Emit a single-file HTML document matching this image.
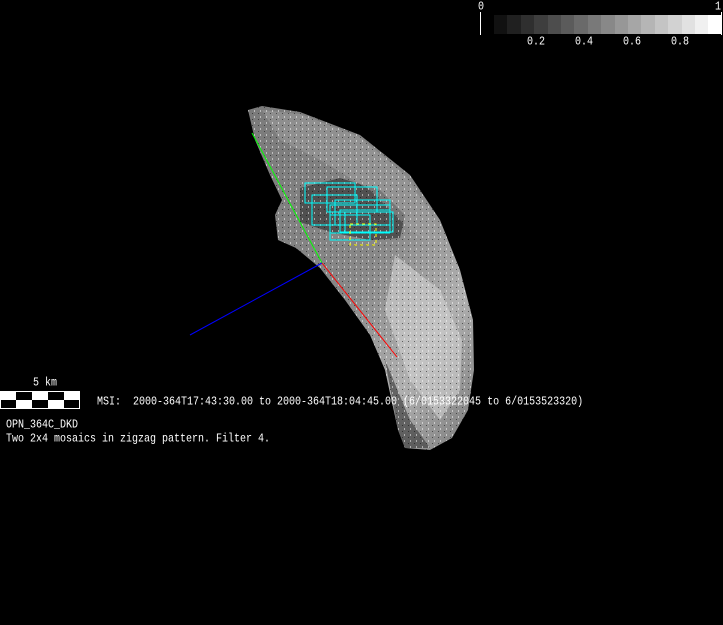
<!DOCTYPE html>
<html><head><meta charset="utf-8"><style>
html,body{margin:0;padding:0;background:#000;width:723px;height:625px;overflow:hidden;position:relative}
.t{position:absolute;color:#fff;font-family:"Liberation Mono",monospace;font-size:10px;white-space:pre;line-height:12px;transform:scaleY(1.2);transform-origin:0 0}
.cb{position:absolute;top:15px;height:19px;width:13.4px}
</style></head><body>
<div style="position:absolute;left:480px;top:12px;width:1px;height:23px;background:#fff"></div>
<div style="position:absolute;left:721px;top:12px;width:1px;height:23px;background:#fff"></div>
<div id="bar"></div>
<div class="t" style="left:478px;top:1px">0</div>
<div class="t" style="left:715px;top:1px">1</div>
<div class="t" style="left:527px;top:36px">0.2</div>
<div class="t" style="left:575px;top:36px">0.4</div>
<div class="t" style="left:623px;top:36px">0.6</div>
<div class="t" style="left:671px;top:36px">0.8</div>
<svg width="723" height="625" style="position:absolute;left:0;top:0">
<defs>
<linearGradient id="g" x1="0" y1="0" x2="1" y2="1">
<stop offset="0" stop-color="#7a7a7a"/><stop offset="0.5" stop-color="#888"/><stop offset="0.75" stop-color="#b0b0b0"/><stop offset="1" stop-color="#7a7a7a"/>
</linearGradient>
<pattern id="p" width="6" height="6" patternUnits="userSpaceOnUse"><rect width="6" height="6" fill="none"/><rect x="2" y="2" width="1" height="2" fill="#fff" opacity="0.5"/><rect x="0" y="5" width="1" height="1" fill="#000" opacity="0.5"/></pattern>
</defs>
<path d="M248,110 L262,106 L300,112 L360,135 L410,175 L440,220 L460,270 L473,320 L474,370 L468,410 L452,438 L430,450 L405,448 L398,430 L385,370 L370,335 L345,300 L320,268 L296,248 L278,240 L275,215 L282,200 L270,175 L255,140 Z" fill="url(#g)"/>
<path d="M300,188 L340,178 L380,190 L405,215 L400,238 L370,240 L330,232 L300,222 Z" fill="#505050"/>
<path d="M262,110 L300,114 L360,137 L405,175 L432,215 L450,255 L410,230 L370,190 L320,160 L280,140 Z" fill="#a0a0a0" opacity="0.5"/>
<path d="M395,255 L440,290 L462,340 L460,390 L440,420 L410,380 L385,310 Z" fill="#d0d0d0" opacity="0.6"/>
<path d="M385,360 L410,420 L430,448 L405,448 L398,430 Z" fill="#444" opacity="0.7"/>
<path d="M248,110 L262,106 L300,112 L360,135 L410,175 L440,220 L460,270 L473,320 L474,370 L468,410 L452,438 L430,450 L405,448 L398,430 L385,370 L370,335 L345,300 L320,268 L296,248 L278,240 L275,215 L282,200 L270,175 L255,140 Z" fill="url(#p)"/>
<line x1="252" y1="133" x2="322" y2="263" stroke="#0f0" stroke-width="1"/>
<line x1="190" y1="335" x2="322" y2="263" stroke="#00f" stroke-width="1"/>
<line x1="322" y1="263" x2="397" y2="357" stroke="#f00" stroke-width="1"/>
<g fill="none" stroke="#0ff" stroke-width="1">
<rect x="305" y="183" width="50" height="20"/><rect x="327" y="187" width="50" height="25"/>
<rect x="312" y="195" width="45" height="30"/><rect x="335" y="200" width="55" height="25"/>
<rect x="330" y="205" width="60" height="28"/><rect x="340" y="210" width="50" height="22"/>
<rect x="330" y="215" width="40" height="25"/><rect x="345" y="212" width="48" height="20"/>
</g>
<rect x="350" y="224" width="26" height="21" fill="none" stroke="#ff0" stroke-dasharray="3,3"/>
<rect x="0.5" y="391.5" width="79" height="17" fill="#fff" stroke="#fff"/>
<g fill="#000"><rect x="16" y="392" width="16" height="8"/><rect x="48" y="392" width="16" height="8"/><rect x="1" y="400" width="15" height="8"/><rect x="32" y="400" width="16" height="8"/><rect x="64" y="400" width="15" height="8"/></g>
</svg>
<div class="t" style="left:33px;top:377px">5 km</div>
<div class="t" style="left:97px;top:396px">MSI:  2000-364T17:43:30.00 to 2000-364T18:04:45.00 (6/0153322045 to 6/0153523320)</div>
<div class="t" style="left:6px;top:419px">OPN_364C_DKD</div>
<div class="t" style="left:6px;top:433px">Two 2x4 mosaics in zigzag pattern. Filter 4.</div>
<script>
var b=document.getElementById('bar');
for(var i=0;i<17;i++){var d=document.createElement('div');d.className='cb';d.style.left=(494+i*13.4)+'px';var v=Math.round(17+i*(238/16));d.style.background='rgb('+v+','+v+','+v+')';b.appendChild(d);}
</script>
</body></html>
